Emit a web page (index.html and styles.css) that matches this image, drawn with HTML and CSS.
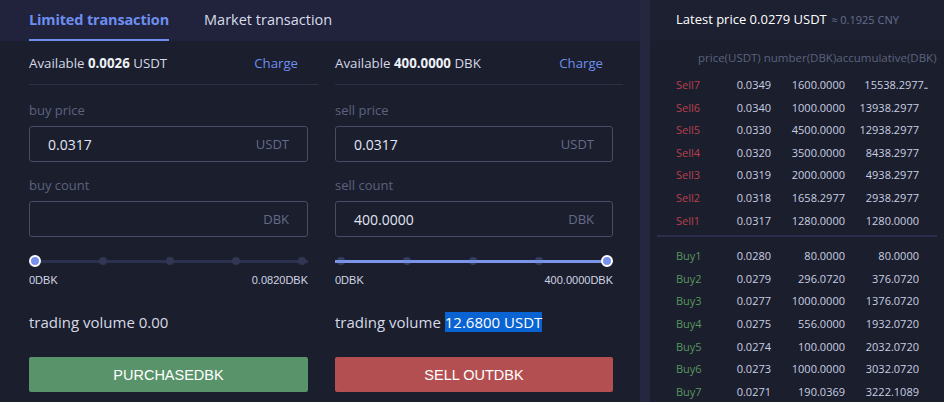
FILE: index.html
```html
<!DOCTYPE html>
<html>
<head>
<meta charset="utf-8">
<link rel="stylesheet" href="styles.css">
</head>
<body>
<div class="page">
  <section class="trade">
    <nav class="tabs">
      <span class="tab active">Limited transaction</span>
      <span class="tab">Market transaction</span>
    </nav>
    <div class="forms">
      <div class="col">
        <div class="avail"><span>Available <b>0.0026</b> USDT</span><span class="charge">Charge</span></div>
        <div class="label first">buy price</div>
        <div class="field"><span class="val">0.0317</span><span class="unit">USDT</span></div>
        <div class="label">buy count</div>
        <div class="field"><span class="val"></span><span class="unit">DBK</span></div>
        <div class="slider">
          <span class="handle"></span><span class="dot"></span><span class="dot"></span><span class="dot"></span><span class="dot"></span>
        </div>
        <div class="range"><span>0DBK</span><span>0.0820DBK</span></div>
        <div class="volume">trading volume 0.00</div>
        <div class="btn buy">PURCHASEDBK</div>
      </div>
      <div class="col">
        <div class="avail"><span>Available <b>400.0000</b> DBK</span><span class="charge">Charge</span></div>
        <div class="label first">sell price</div>
        <div class="field"><span class="val">0.0317</span><span class="unit">USDT</span></div>
        <div class="label">sell count</div>
        <div class="field"><span class="val">400.0000</span><span class="unit">DBK</span></div>
        <div class="slider full">
          <span class="dot"></span><span class="dot"></span><span class="dot"></span><span class="dot"></span><span class="handle"></span>
        </div>
        <div class="range"><span>0DBK</span><span>400.0000DBK</span></div>
        <div class="volume">trading volume <span class="sel">12.6800 USDT</span></div>
        <div class="btn sell">SELL OUTDBK</div>
      </div>
    </div>
  </section>
  <div class="divider"></div>
  <aside class="book">
    <div class="book-head">Latest price 0.0279 USDT <span class="cny">≈ 0.1925 CNY</span></div>
    <div class="cols">price(USDT) number(DBK)accumulative(DBK)</div>
    <div class="rows">
      <div class="row"><span class="s">Sell7</span><span>0.0349</span><span>1600.0000</span><span>15538.2977<i class="dots">..</i></span></div>
      <div class="row"><span class="s">Sell6</span><span>0.0340</span><span>1000.0000</span><span>13938.2977</span></div>
      <div class="row"><span class="s">Sell5</span><span>0.0330</span><span>4500.0000</span><span>12938.2977</span></div>
      <div class="row"><span class="s">Sell4</span><span>0.0320</span><span>3500.0000</span><span>8438.2977</span></div>
      <div class="row"><span class="s">Sell3</span><span>0.0319</span><span>2000.0000</span><span>4938.2977</span></div>
      <div class="row"><span class="s">Sell2</span><span>0.0318</span><span>1658.2977</span><span>2938.2977</span></div>
      <div class="row"><span class="s">Sell1</span><span>0.0317</span><span>1280.0000</span><span>1280.0000</span></div>
    </div>
    <div class="sep"></div>
    <div class="rows">
      <div class="row"><span class="b">Buy1</span><span>0.0280</span><span>80.0000</span><span>80.0000</span></div>
      <div class="row"><span class="b">Buy2</span><span>0.0279</span><span>296.0720</span><span>376.0720</span></div>
      <div class="row"><span class="b">Buy3</span><span>0.0277</span><span>1000.0000</span><span>1376.0720</span></div>
      <div class="row"><span class="b">Buy4</span><span>0.0275</span><span>556.0000</span><span>1932.0720</span></div>
      <div class="row"><span class="b">Buy5</span><span>0.0274</span><span>100.0000</span><span>2032.0720</span></div>
      <div class="row"><span class="b">Buy6</span><span>0.0273</span><span>1000.0000</span><span>3032.0720</span></div>
      <div class="row"><span class="b">Buy7</span><span>0.0271</span><span>190.0369</span><span>3222.1089</span></div>
    </div>
  </aside>
</div>
</body>
</html>
```
FILE: styles.css
```css
* { box-sizing: border-box; }
html, body { margin: 0; padding: 0; }
body {
  background: #1b1e2c;
  font-family: "Open Sans", "Liberation Sans", sans-serif;
  color: #d4d8e8;
  width: 944px;
  height: 402px;
  overflow: hidden;
}
.page { display: flex; height: 402px; }

.trade { width: 640px; flex: none; background: #1b1e2c; }
.tabs {
  height: 41px;
  background: #20233b;
  display: flex;
  padding-left: 29px;
  gap: 35px;
}
.tab {
  font-size: 14.5px;
  line-height: 39px;
  border-bottom: 2px solid transparent;
  color: #d9dcea;
}
.tab.active {
  color: #6d8ef0;
  font-weight: bold;
  letter-spacing: -0.15px;
  border-bottom-color: #6d8ef0;
}

.forms { display: flex; padding-left: 29px; gap: 27px; }
.col { width: 279px; display: flex; flex-direction: column; }
.col + .col { width: 278px; }

.avail {
  height: 44px;
  display: flex;
  align-items: center;
  justify-content: space-between;
  margin-right: -10px;
  padding-right: 20px;
  font-size: 13.3px;
  color: #d4d8e8;
  border-bottom: 1px solid #2c3046;
}
.avail b { color: #eef0f8; }
.charge { color: #6d8ef0; font-size: 13.2px; }

.label {
  font-size: 13px;
  line-height: 18px;
  color: #5c627f;
  margin-top: 14px;
  margin-bottom: 7px;
}
.label.first { margin-top: 16px; }

.field {
  height: 36px;
  border: 1px solid #464b66;
  border-radius: 3px;
  display: flex;
  align-items: center;
  justify-content: space-between;
  padding: 0 18px 0 18px;
}
.val { font-size: 14px; color: #e0e4f4; }
.unit { font-size: 13px; color: #656b8a; }

.slider {
  margin-top: 18px;
  height: 12px;
  display: flex;
  align-items: center;
  justify-content: space-between;
  padding-right: 2px;
  background: linear-gradient(#2d3150, #2d3150) center / 100% 3px no-repeat;
}
.slider.full {
  padding-right: 0;
  padding-left: 2px;
  background: linear-gradient(#7a95ea, #7a95ea) left center / 272px 3px no-repeat;
}
.dot { width: 8px; height: 8px; border-radius: 50%; background: #323652; }
.slider.full .dot { background: rgba(110, 135, 215, 0.3); }
.handle {
  width: 12px;
  height: 12px;
  border-radius: 50%;
  background: #7891ec;
  border: 2px solid #ffffff;
}

.range {
  margin-top: 6px;
  display: flex;
  justify-content: space-between;
  font-family: "Liberation Sans", Arial, sans-serif;
  font-size: 11px;
  line-height: 14px;
  color: #d0d4e4;
}

.volume {
  margin-top: 25px;
  font-size: 15px;
  line-height: 20px;
  color: #d6d9e8;
}
.sel { background: #0a63d2; color: #ffffff; }

.btn {
  margin-top: 25px;
  height: 35px;
  border-radius: 2px;
  display: flex;
  align-items: center;
  justify-content: center;
  font-family: "Liberation Sans", Arial, sans-serif;
  font-size: 14.5px;
  color: #ffffff;
}
.btn.buy { background: #58936a; }
.btn.sell { background: #b34f50; }

.divider { width: 10px; flex: none; background: #24273e; }

.book { flex: 1; background: #1b1e2c; }
.book-head {
  height: 41px;
  background: #1d2031;
  padding-left: 26px;
  font-size: 13px;
  line-height: 39px;
  color: #ffffff;
}
.cny { font-size: 11px; color: #676d8c; margin-left: 1px; }
.cols {
  margin-top: 9px;
  padding-left: 48px;
  font-size: 11.5px;
  line-height: 16px;
  color: #5c637f;
  white-space: nowrap;
}
.rows { margin-top: 8px; }
.rows + .rows { margin-top: 6px; }
.row {
  display: grid;
  grid-template-columns: 50px 45px 74px 74px;
  padding-left: 26px;
  height: 22.6px;
  line-height: 22.6px;
  font-size: 11px;
  color: #c9cee2;
  text-align: right;
  white-space: nowrap;
}
.row .s { color: #b8404f; text-align: left; }
.row .b { color: #57975f; text-align: left; }
.dots { font-style: normal; font-size: 9px; font-weight: bold; margin-right: -8px; letter-spacing: -1px; }
.sep { margin: 3px 7px 0; height: 2px; background: #2a2e4a; }
```
